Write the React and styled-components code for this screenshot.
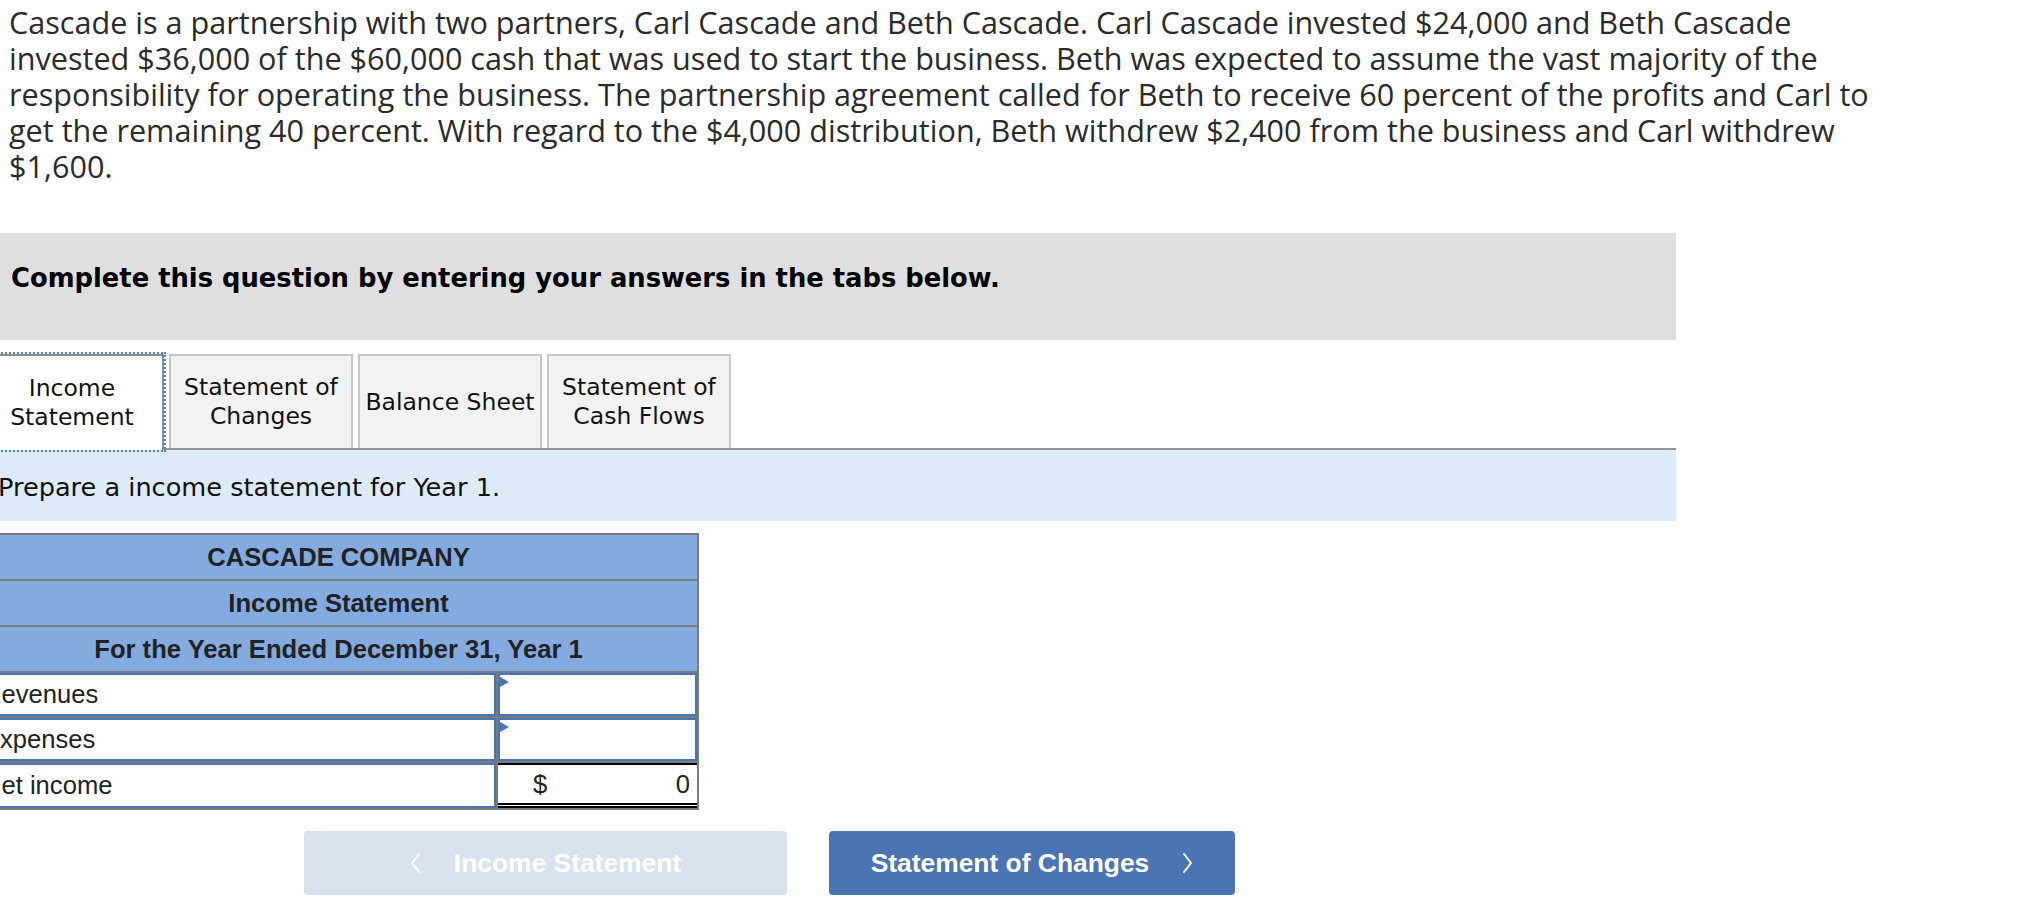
import React from "react";
import styled, { createGlobalStyle } from "styled-components";

const GlobalStyle = createGlobalStyle`
  html, body {
    margin: 0;
    padding: 0;
    background: #ffffff;
  }
  body {
    overflow: hidden;
  }
`;

const Page = styled.div`
  width: 2030px;
  height: 902px;
  overflow: hidden;
`;

const Question = styled.p`
  margin: 4px 0 0 9px;
  width: 1880px;
  font-family: "Open Sans", "Liberation Sans", sans-serif;
  font-size: 30.6px;
  line-height: 36px;
  color: #2b2b2b;
`;

const Work = styled.div`
  margin: 49px 0 0 -22px;
  width: 1698px;
`;

const Banner = styled.div`
  height: 107px;
  box-sizing: border-box;
  padding: 30px 0 0 33px;
  background: #dfdfdf;
  font-family: "DejaVu Sans", Verdana, sans-serif;
  font-weight: bold;
  font-size: 25.8px;
  line-height: 30px;
  color: #000000;
`;

const TabBar = styled.div`
  display: flex;
  align-items: flex-end;
  gap: 5px;
  margin-top: 14px;
  padding-left: 2px;
  border-bottom: 2px solid #949494;
`;

const Tab = styled.button`
  width: 184px;
  height: ${(props) => (props.$active ? "96px" : "94px")};
  margin-bottom: ${(props) => (props.$active ? "-2px" : "0")};
  box-sizing: border-box;
  padding: 0 4px;
  background: ${(props) => (props.$active ? "#ffffff" : "#f2f2f2")};
  border: 2px solid ${(props) => (props.$active ? "#8a8a8a" : "#c6c6c6")};
  border-bottom: none;
  outline: ${(props) => (props.$active ? "2px dotted #4a7fd4" : "none")};
  outline-offset: 0;
  font-family: "DejaVu Sans", Verdana, sans-serif;
  font-size: 23.5px;
  line-height: 29px;
  color: #111111;
  text-align: center;
  cursor: pointer;
`;

const Instructions = styled.div`
  height: 71px;
  box-sizing: border-box;
  padding: 22px 0 0 20px;
  background: #ddeaf7;
  font-family: "DejaVu Sans", Verdana, sans-serif;
  font-size: 25.6px;
  line-height: 30px;
  color: #111111;
`;

const Sheet = styled.div`
  display: grid;
  grid-template-columns: 1fr 199px;
  gap: 2px;
  width: 721px;
  box-sizing: border-box;
  margin-top: 12px;
  border: 2px solid #7a7a7a;
  background: #7a7a7a;
  font-family: "Liberation Sans", Arial, sans-serif;
  font-size: 25.6px;
  color: #222222;
`;

const HeadCell = styled.div`
  grid-column: 1 / -1;
  height: 44px;
  display: flex;
  align-items: center;
  justify-content: center;
  background: #84abe0;
  font-weight: bold;
`;

const Entry = styled.div`
  position: relative;
  height: ${(props) => (props.$tall ? "45px" : "43px")};
  box-sizing: border-box;
  display: flex;
  align-items: center;
  padding-left: 1px;
  background: #ffffff;
  border: 2px solid #4b74b4;
`;

const Marker = styled.span`
  position: absolute;
  left: 0;
  top: 2px;
  width: 0;
  height: 0;
  border-left: 9px solid #4b74b4;
  border-top: 5px solid transparent;
  border-bottom: 5px solid transparent;
`;

const Total = styled.div`
  height: 45px;
  box-sizing: border-box;
  display: flex;
  align-items: center;
  justify-content: space-between;
  padding: 0 7px 0 35px;
  background: #ffffff;
  border-top: 2px solid #000000;
  border-bottom: 5px double #000000;
`;

const NavRow = styled.div`
  display: flex;
  gap: 42px;
  margin-top: 21px;
  padding-left: 326px;
`;

const NavButton = styled.button`
  width: ${(props) => props.$width}px;
  height: 64px;
  display: flex;
  align-items: center;
  justify-content: center;
  gap: 32px;
  border: none;
  border-radius: 4px;
  background: ${(props) => (props.$disabled ? "#d8e2ef" : "#4a74b4")};
  color: #ffffff;
  font-family: "Liberation Sans", Arial, sans-serif;
  font-weight: bold;
  font-size: 26.4px;
  cursor: ${(props) => (props.$disabled ? "default" : "pointer")};
`;

const Chevron = ({ dir }) => (
  <svg width="12" height="22" viewBox="0 0 12 22" fill="none">
    <polyline
      points={dir === "left" ? "9,2 2,11 9,20" : "3,2 10,11 3,20"}
      stroke="#ffffff"
      strokeWidth="2"
      strokeLinecap="round"
      strokeLinejoin="round"
    />
  </svg>
);

const tabs = [
  ["Income", "Statement"],
  ["Statement of", "Changes"],
  ["Balance Sheet"],
  ["Statement of", "Cash Flows"],
];

export default function App() {
  return (
    <Page>
      <GlobalStyle />
      <Question>
        Cascade is a partnership with two partners, Carl Cascade and Beth Cascade. Carl Cascade invested
        $24,000 and Beth Cascade invested $36,000 of the $60,000 cash that was used to start the business.
        Beth was expected to assume the vast majority of the responsibility for operating the business. The
        partnership agreement called for Beth to receive 60 percent of the profits and Carl to get the
        remaining 40 percent. With regard to the $4,000 distribution, Beth withdrew $2,400 from the business
        and Carl withdrew $1,600.
      </Question>

      <Work>
        <Banner>Complete this question by entering your answers in the tabs below.</Banner>

        <TabBar>
          {tabs.map((lines, i) => (
            <Tab key={i} $active={i === 0}>
              {lines.map((l, j) => (
                <React.Fragment key={j}>
                  {j > 0 && <br />}
                  {l}
                </React.Fragment>
              ))}
            </Tab>
          ))}
        </TabBar>

        <Instructions>Prepare a income statement for Year 1.</Instructions>

        <Sheet>
          <HeadCell>CASCADE COMPANY</HeadCell>
          <HeadCell>Income Statement</HeadCell>
          <HeadCell>For the Year Ended December 31, Year 1</HeadCell>

          <Entry>Revenues</Entry>
          <Entry>
            <Marker />
          </Entry>

          <Entry>Expenses</Entry>
          <Entry>
            <Marker />
          </Entry>

          <Entry $tall>Net income</Entry>
          <Total>
            <span>$</span>
            <span>0</span>
          </Total>
        </Sheet>

        <NavRow>
          <NavButton $width={483} $disabled>
            <Chevron dir="left" />
            Income Statement
          </NavButton>
          <NavButton $width={406}>
            Statement of Changes
            <Chevron dir="right" />
          </NavButton>
        </NavRow>
      </Work>
    </Page>
  );
}
